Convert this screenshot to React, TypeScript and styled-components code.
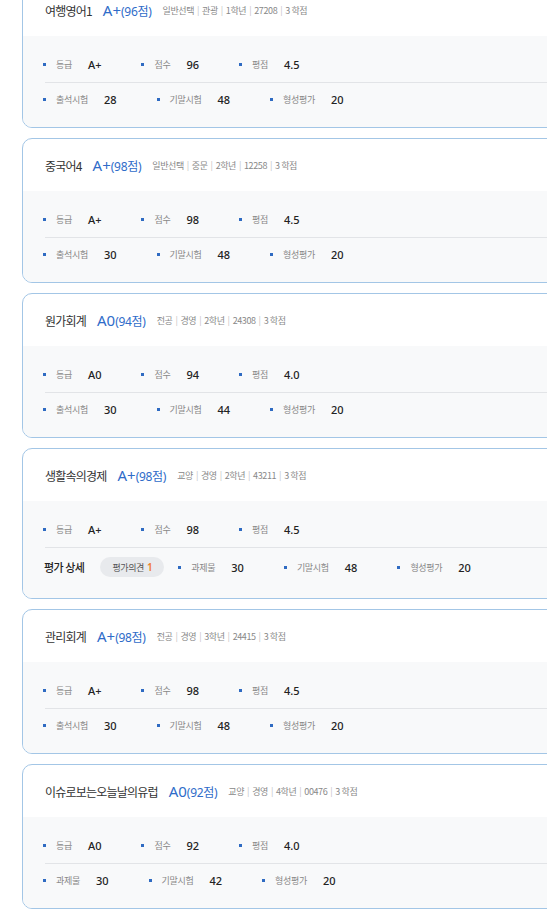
import React from "react";
import styled, { createGlobalStyle } from "styled-components";

const Global = createGlobalStyle`
  html, body { margin: 0; padding: 0; background: #ffffff; overflow: hidden; }
  body { font-family: "Noto Sans CJK KR", "Noto Sans", sans-serif; }
`;

type Item = { label: string; value: string };
type Course = {
  title: string;
  grade: string;
  score: string;
  meta: string[];
  main: Item[];
  detail?: boolean;
  sub: Item[];
};

const courses: Course[] = [
  {
    title: "여행영어1", grade: "A+", score: "96", meta: ["일반선택", "관광", "1학년", "27208", "3 학점"],
    main: [{ label: "등급", value: "A+" }, { label: "점수", value: "96" }, { label: "평점", value: "4.5" }],
    sub: [{ label: "출석시험", value: "28" }, { label: "기말시험", value: "48" }, { label: "형성평가", value: "20" }],
  },
  {
    title: "중국어4", grade: "A+", score: "98", meta: ["일반선택", "중문", "2학년", "12258", "3 학점"],
    main: [{ label: "등급", value: "A+" }, { label: "점수", value: "98" }, { label: "평점", value: "4.5" }],
    sub: [{ label: "출석시험", value: "30" }, { label: "기말시험", value: "48" }, { label: "형성평가", value: "20" }],
  },
  {
    title: "원가회계", grade: "A0", score: "94", meta: ["전공", "경영", "2학년", "24308", "3 학점"],
    main: [{ label: "등급", value: "A0" }, { label: "점수", value: "94" }, { label: "평점", value: "4.0" }],
    sub: [{ label: "출석시험", value: "30" }, { label: "기말시험", value: "44" }, { label: "형성평가", value: "20" }],
  },
  {
    title: "생활속의경제", grade: "A+", score: "98", meta: ["교양", "경영", "2학년", "43211", "3 학점"],
    main: [{ label: "등급", value: "A+" }, { label: "점수", value: "98" }, { label: "평점", value: "4.5" }],
    detail: true,
    sub: [{ label: "과제물", value: "30" }, { label: "기말시험", value: "48" }, { label: "형성평가", value: "20" }],
  },
  {
    title: "관리회계", grade: "A+", score: "98", meta: ["전공", "경영", "3학년", "24415", "3 학점"],
    main: [{ label: "등급", value: "A+" }, { label: "점수", value: "98" }, { label: "평점", value: "4.5" }],
    sub: [{ label: "출석시험", value: "30" }, { label: "기말시험", value: "48" }, { label: "형성평가", value: "20" }],
  },
  {
    title: "이슈로보는오늘날의유럽", grade: "A0", score: "92", meta: ["교양", "경영", "4학년", "00476", "3 학점"],
    main: [{ label: "등급", value: "A0" }, { label: "점수", value: "92" }, { label: "평점", value: "4.0" }],
    sub: [{ label: "과제물", value: "30" }, { label: "기말시험", value: "42" }, { label: "형성평가", value: "20" }],
  },
];

const List = styled.div`
  display: flex;
  flex-direction: column;
  gap: 10px;
  margin-top: -17px;
  padding-left: 22px;
`;

const Card = styled.section`
  width: 640px;
  flex: none;
  border: 1px solid #a3c6e6;
  border-radius: 10px;
  background: #ffffff;
  overflow: hidden;
`;

const Header = styled.div`
  height: 52px;
  display: flex;
  align-items: center;
  padding-left: 22px;
  gap: 11px;
`;

const Title = styled.span`
  font-size: 12px;
  letter-spacing: -0.8px;
  color: #333333;
`;

const Grade = styled.span`
  color: #2f6cc9;
  font-size: 15px;
  font-family: "Noto Sans", "Noto Sans CJK KR", sans-serif;
  display: flex;
  align-items: baseline;
`;

const Score = styled.span`
  font-size: 12px;
  letter-spacing: -0.3px;
`;

const Meta = styled.span`
  font-size: 9px;
  color: #888888;
  letter-spacing: -0.4px;
`;

const Sep = styled.span`
  color: #c4c4c4;
  margin: 0 3px;
`;

const Body = styled.div`
  background: #f8f9fa;
  padding: 20px 0 20px 20px;
`;

const Row = styled.div<{ $tall?: boolean }>`
  display: flex;
  align-items: center;
  min-height: ${(p) => (p.$tall ? 22 : 16)}px;
  gap: 40px;
`;

const Divider = styled.div`
  height: 1px;
  background: #e2e4e7;
  margin: 10px 0 8px 2px;
`;

const ItemBox = styled.div`
  display: flex;
  align-items: center;
`;

const Bullet = styled.span`
  width: 3px;
  height: 3px;
  background: #2f6bc2;
  margin-right: 10px;
`;

const Label = styled.span`
  font-size: 9px;
  letter-spacing: -0.3px;
  color: #888888;
  margin-right: 16px;
`;

const Value = styled.span`
  font-family: "Noto Sans", sans-serif;
  font-size: 11px;
  font-weight: 500;
  color: #222222;
`;

const DetailGroup = styled.div`
  display: flex;
  align-items: center;
  gap: 16px;
  margin-left: 1px;
  margin-right: -26px;
`;

const DetailTitle = styled.span`
  font-size: 11px;
  font-weight: 500;
  color: #222222;
  letter-spacing: -0.5px;
`;

const Pill = styled.span`
  height: 20px;
  padding: 0 12px;
  border-radius: 10px;
  background: #e8eaed;
  display: flex;
  align-items: center;
  font-size: 9px;
  color: #555555;
  letter-spacing: -0.4px;
`;

const Count = styled.b`
  color: #f07b2b;
  font-family: "Noto Sans", sans-serif;
  font-weight: 600;
  font-size: 10px;
  margin-left: 3px;
`;

function Stat({ item }: { item: Item }) {
  return (
    <ItemBox>
      <Bullet />
      <Label>{item.label}</Label>
      <Value>{item.value}</Value>
    </ItemBox>
  );
}

export default function App() {
  return (
    <>
      <Global />
      <List>
        {courses.map((c) => (
          <Card key={c.title}>
            <Header>
              <Title>{c.title}</Title>
              <Grade>
                {c.grade}
                <Score>({c.score}점)</Score>
              </Grade>
              <Meta>
                {c.meta.map((m, i) => (
                  <React.Fragment key={i}>
                    {i > 0 && <Sep>|</Sep>}
                    {m}
                  </React.Fragment>
                ))}
              </Meta>
            </Header>
            <Body>
              <Row>
                {c.main.map((it) => (
                  <Stat key={it.label} item={it} />
                ))}
              </Row>
              <Divider />
              <Row $tall={c.detail}>
                {c.detail && (
                  <DetailGroup>
                    <DetailTitle>평가 상세</DetailTitle>
                    <Pill>
                      평가의견<Count>1</Count>
                    </Pill>
                  </DetailGroup>
                )}
                {c.sub.map((it) => (
                  <Stat key={it.label} item={it} />
                ))}
              </Row>
            </Body>
          </Card>
        ))}
      </List>
    </>
  );
}
